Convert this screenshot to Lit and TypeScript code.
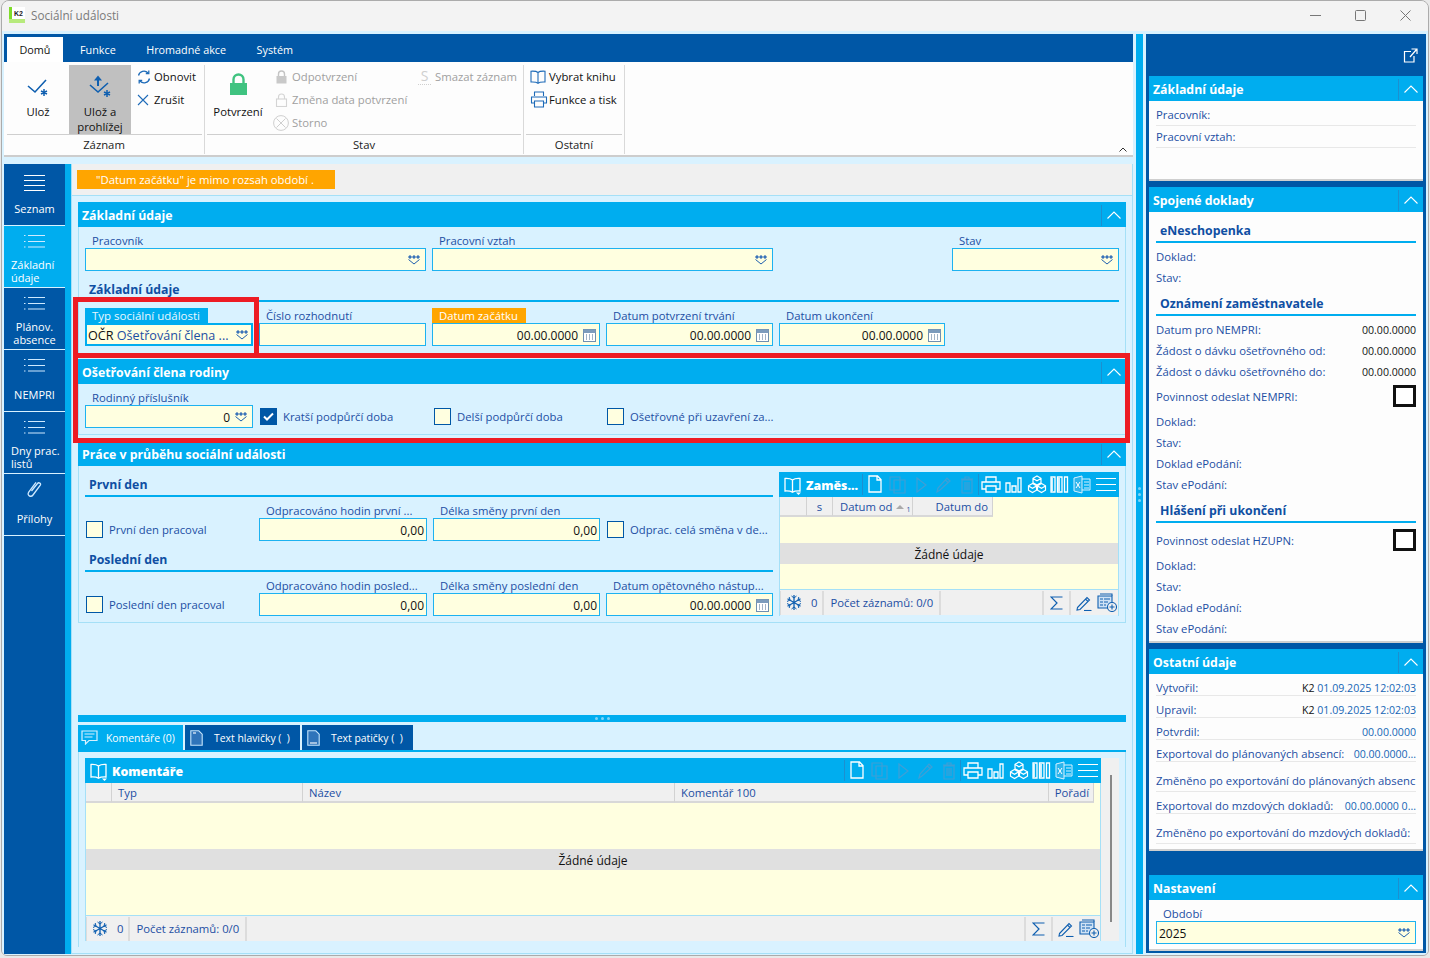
import { LitElement, html, css, nothing } from "lit";
import { customElement } from "lit/decorators.js";

const caret = html`<path d="M14 17.5h5l-2.5 2.5z" fill="#fff" stroke="none" />`;
const I = {
  save: html`<svg width="22" height="20" viewBox="0 0 22 20" fill="none" stroke="#0f5fb0" stroke-width="1.6"><path d="M1 8l7 6L19 2" /><path d="M17 11v7M14 13l6 3M20 13l-6 3" stroke-width="1.5" /></svg>`,
  saveUp: html`<svg width="24" height="24" viewBox="0 0 24 24" fill="none" stroke="#0f5fb0" stroke-width="1.6"><path d="M10 11V3" stroke-width="2" /><path d="M6 5.500l4-5 4 5z" fill="#0f5fb0" stroke="none" /><path d="M2 10l8 7 10-9" /><path d="M19 15v7M16 17l6 3M22 17l-6 3" stroke-width="1.5" /></svg>`,
  refresh: html`<svg width="14" height="14" viewBox="0 0 14 14" fill="none" stroke="#1e6bb8" stroke-width="1.3"><path d="M1.500 5.500A5.500 5.500 0 0 1 11 3" /><path d="M12.500 8.500A5.500 5.500 0 0 1 3 11" /><path d="M11.800.5v3h-3M2.200 13.500v-3h3" /></svg>`,
  cross: html`<svg width="12" height="12" viewBox="0 0 12 12" fill="none" stroke="#1e6bb8" stroke-width="1.1"><path d="M1 1l10 10M11 1L1 11" /></svg>`,
  lockG: html`<svg width="19" height="23" viewBox="0 0 19 23"><path d="M4.500 10V6.500a5 5 0 0 1 10 0V10" fill="none" stroke="#3fc380" stroke-width="2.4" /><rect x="1" y="10" width="17" height="12" fill="#3fc380" /></svg>`,
  lockF: html`<svg width="13" height="14" viewBox="0 0 13 14"><path d="M3.500 6V4a3 3 0 0 1 6 0v2" fill="none" stroke="#c4c4c4" stroke-width="1.4" /><rect x="1.500" y="6" width="10" height="7.500" fill="#c9c9c9" /></svg>`,
  lockO: html`<svg width="13" height="14" viewBox="0 0 13 14" fill="none" stroke="#d4d4d4" stroke-width="1.1"><path d="M3.500 6V4a3 3 0 0 1 6 0v2" /><rect x="1.500" y="6" width="10" height="7.500" /></svg>`,
  noEntry: html`<svg class="ne" width="16" height="16" viewBox="0 0 16 16" fill="none" stroke="#cfcfcf" stroke-width="1"><circle cx="8" cy="8" r="7.400" /><path d="M3.500 3.500l9 9M12.500 3.500l-9 9" /></svg>`,
  book: html`<svg width="16" height="14" viewBox="0 0 16 14" fill="none" stroke="#1e6bb8" stroke-width="1.1"><path d="M8 2.500C6.500 1.200 4 1 1 1.200V12c3-.2 5.500 0 7 1.300 1.500-1.300 4-1.500 7-1.300V1.200C12 1 9.500 1.200 8 2.500zM8 2.500v10.800" /></svg>`,
  printer: html`<svg width="18" height="17" viewBox="0 0 18 17" fill="none" stroke="#1e6bb8" stroke-width="1.1"><path d="M4.500 5V1h9v4M4.500 12H1.500V6h15v6h-3" /><path d="M4.500 10h9v6h-9z" /></svg>`,
  popout: html`<svg width="15" height="15" viewBox="0 0 15 15" fill="none" stroke="#fff" stroke-width="1.200"><path d="M8 3.500H1.500v10.500H11V8" /><path d="M7 9l6.500-7.500M8.500 1h5.500v5" /></svg>`,
  chevron: html`<svg width="14" height="8" viewBox="0 0 14 8" fill="none" stroke="#fff" stroke-width="1.100"><path d="M.5 7.500L7 1l6.500 6.500" /></svg>`,
  chevronDark: html`<svg width="8" height="5" viewBox="0 0 8 5" fill="none" stroke="#333" stroke-width="1"><path d="M.5 4.500L4 1l3.500 3.500" /></svg>`,
  combo: html`<svg width="12" height="10" viewBox="0 0 12 10" fill="none" stroke="#1e5fae" stroke-width="1"><path d="M1 1h2v2H1zM5 1h2v2H5zM9 1h2v2H9z" fill="#8fb4dc" /><path d="M.5 4.500L6 9l5.500-4.500" /></svg>`,
  cal: html`<svg width="13" height="14" viewBox="0 0 13 14"><rect x=".5" y="1.500" width="12" height="12" fill="#fff" stroke="#6f8fb0" /><rect x=".5" y="1.500" width="12" height="3.500" fill="#7d9cbc" /><path d="M3 7h1M6 7h1M9 7h1M3 9h1M6 9h1M9 9h1M3 11h1M6 11h1M9 11h1" stroke="#44688c" /></svg>`,
  tick: html`<svg width="11" height="9" viewBox="0 0 11 9" fill="none" stroke="#fff" stroke-width="2"><path d="M1 4.500l3 3 6-6" /></svg>`,
  list4: html`<svg width="21" height="17" viewBox="0 0 21 17" stroke="#fff" stroke-width="1"><path d="M0 1.500h21M0 6.500h21M0 11.500h21M0 16.500h21" /></svg>`,
  list3: html`<svg width="21" height="14" viewBox="0 0 21 14" stroke="#cfeaff" stroke-width="1"><path d="M0 1.500h1.500M4 1.500h17M0 7.500h1.500M4 7.500h17M0 13h1.500M4 13h17" /></svg>`,
  clip: html`<svg width="17" height="20" viewBox="0 0 17 20" fill="none" stroke="#cfeaff" stroke-width="1.300"><path d="M5.500 11.500l6-7.500c1.200-1.500 4-.2 2.800 1.700L7 15.500c-2 2.600-6.500.5-4.300-2.800L10 2.800" transform="translate(0 .5)" /></svg>`,
  bubble: html`<svg width="17" height="15" viewBox="0 0 17 15" fill="none" stroke="#d8f1ff" stroke-width="1.200"><path d="M1 1h15v9.500H8L4.500 14v-3.500H1z" /><path d="M3.500 4h10M3.500 7h8" /></svg>`,
  docT: html`<svg width="13" height="16" viewBox="0 0 13 16" fill="#2f74ba" stroke="#c4e4fb" stroke-width="1.100"><path d="M.8.800h8l3.400 3.400v11H.8z" /><path d="M3 3h3" stroke="#fff" /></svg>`,
  docB: html`<svg width="13" height="16" viewBox="0 0 13 16" fill="#2f74ba" stroke="#c4e4fb" stroke-width="1.100"><path d="M.8.800h8l3.400 3.400v11H.8z" /><path d="M3 13h7" stroke="#fff" /></svg>`,
  star: html`<svg width="16" height="17" viewBox="0 0 16 17" fill="none" stroke="#0f5fb0" stroke-width="1.300"><path d="M8 1v15M1.500 4.700l13 7.600M14.500 4.700l-13 7.600" /><path d="M5.500 2L8 4l2.500-2M5.500 15L8 13l2.500 2M1 7.500L4 6 3.200 3M15 7.500L12 6l.8-3M1 9.500L4 11l-.8 3M15 9.500L12 11l.8 3" stroke-width="1" /></svg>`,
  sigma: html`<svg width="13" height="14" viewBox="0 0 13 14" fill="none" stroke="#0f5fb0" stroke-width="1.200"><path d="M12.500 1H1l6 6-6 6h11.500" /></svg>`,
  pen: html`<svg width="16" height="16" viewBox="0 0 16 16" fill="none" stroke="#0f5fb0" stroke-width="1.100"><path d="M1.500 12.500L11 2.500l2.500 2.500-9.500 9.500-3 .5zM9.500 4l2.500 2.500" /><path d="M8 15.500h7.500" /></svg>`,
  addList: html`<svg width="20" height="19" viewBox="0 0 20 19" fill="none" stroke="#0f5fb0" stroke-width="1.100"><path d="M3 1h12v2" /><path d="M1 3h14v12H1z" fill="#cfe2f5" /><path d="M3 6h3M7 6h6M3 9h3M7 9h4M3 12h3M7 12h2" /><circle cx="15" cy="14" r="4.500" fill="#f0f0f0" /><path d="M15 11.500v5M12.500 14h5" /></svg>`,
};

const T = {
  doc: html`<svg width="22" height="22" viewBox="0 0 22 22" fill="none" stroke="#fff" stroke-width="1.300"><path d="M5 2h8.500l3.500 3.500V18H5zM13 2v4h4" /></svg>`,
  copy: html`<svg width="22" height="22" viewBox="0 0 22 22" fill="none" stroke="#3e9fd6" stroke-width="1.200"><path d="M3 3h10v13H3zM7 6h11v13H7z" /></svg>`,
  play: html`<svg width="22" height="22" viewBox="0 0 22 22" fill="none" stroke="#3e9fd6" stroke-width="1.200"><path d="M7 4l9 7-9 7z" /></svg>`,
  pen: html`<svg width="22" height="22" viewBox="0 0 22 22" fill="none" stroke="#3e9fd6" stroke-width="1.200"><path d="M4 18l1-4 9-10 3 3-10 9zM12.500 6l3 3" /></svg>`,
  trash: html`<svg width="22" height="22" viewBox="0 0 22 22" fill="none" stroke="#3e9fd6" stroke-width="1.200"><path d="M6 6h10v13H6zM5 5h12M9 5V3h4v2M9 8v8M11 8v8M13 8v8" /></svg>`,
  printer: html`<svg width="22" height="22" viewBox="0 0 22 22" fill="none" stroke="#fff" stroke-width="1.300"><path d="M6 8V3h10v5M6 15H2V8h18v7h-4" /><path d="M6 12h10v6H6z" />${caret}</svg>`,
  chart: html`<svg width="22" height="22" viewBox="0 0 22 22" fill="none" stroke="#fff" stroke-width="1.300"><path d="M3 9h4v9H3zM9 12h4v6H9zM15 4h3v14h-3z" />${caret}</svg>`,
  cubes: html`<svg width="22" height="22" viewBox="0 0 22 22" fill="none" stroke="#fff" stroke-width="1.200"><path d="M11 2l4 2.300v4.400L11 11 7 8.700V4.300zM6.500 9.500l4 2.300v4.400L6.500 18.500l-4-2.300v-4.400zM15.500 9.500l4 2.300v4.400l-4 2.300-4-2.300v-4.400zM7 4.500l4 2.200 4-2.200M2.500 12l4 2.200 4-2.200M11.500 12l4 2.200 4-2.200" />${caret}</svg>`,
  cols: html`<svg width="22" height="22" viewBox="0 0 22 22" fill="none" stroke="#fff" stroke-width="1.300"><path d="M2 3h4v15H2zM8.500 3H13v15H8.500zM15.500 3h3v15h-3z" /><path d="M3 4v13M10 4v13" stroke-width="1.600" />${caret}</svg>`,
  excel: html`<svg width="22" height="22" viewBox="0 0 22 22" fill="none" stroke="#d8f1ff" stroke-width="1"><path d="M10 2L2 4v13l8 2z" fill="#2db5ec" /><path d="M10 5h8v11h-8M12 8h5M12 11h5M12 14h5" /><path d="M4 8l4 6M8 8l-4 6" stroke="#fff" />${caret}</svg>`,
  menu: html`<svg width="22" height="22" viewBox="0 0 22 22" stroke="#fff" stroke-width="1.200"><path d="M1 4.500h20M1 10.500h20M1 16.500h20" /></svg>`,
  book: html`<svg width="20" height="20" viewBox="0 0 20 20" fill="none" stroke="#fff" stroke-width="1.300"><path d="M9.500 5C7.500 3.500 5 3.300 2 3.500V16c3-.2 5.500 0 7.500 1.300C11.500 16 14 15.800 17 16V3.500C14 3.300 11.500 3.500 9.500 5zM9.500 5v12" /><path d="M13 17.500h5l-2.500 2.500z" fill="#fff" stroke="none" /></svg>`,
};

@customElement("app-root")
export class AppRoot extends LitElement {
  static styles = css`
    :host { display: block; width: 1430px; height: 958px; overflow: hidden; position: relative; background: #e9e9e9;
      font-family: "Open Sans", "Noto Sans", sans-serif; font-size: 11.3px; color: #1c4ea3; }
    * { box-sizing: border-box; }
    svg { display: block; flex: none; }
    .window { margin: 0 1px; width: 1428px; height: 956px; border: 1px solid #ababab; border-radius: 8px 8px 6px 6px; overflow: hidden; display: flex; flex-direction: column; }
    .title { height: 30px; background: #f3f3f3; display: flex; align-items: center; padding: 0 0 2px 7px; color: #7a7a7a; font-size: 11.7px; flex: none; }
    .logo { width: 16px; height: 16px; background: linear-gradient(90deg, #7fdc2a 0 3px, #fff 3px); border-bottom: 4px solid #b7ea7c; margin-right: 6px; font: bold 7px "Liberation Sans", sans-serif; color: #222; display: flex; align-items: center; justify-content: center; padding-left: 3px; }
    .winbtns { margin-left: auto; display: flex; align-items: center; }
    .winbtn { width: 45px; height: 28px; display: flex; align-items: center; justify-content: center; }
    .client { flex: 1; min-height: 0; background: #d9f2ff; display: flex; padding: 3px 0 1px 2px; }
    .main { width: 1129px; display: flex; flex-direction: column; flex: none; }
    .vsplit { width: 7px; margin: 0 3px; background: #00adef; flex: none; display: flex; flex-direction: column; align-items: center; justify-content: center; gap: 3px; }
    .vsplit i, .hsplit i { width: 3px; height: 3px; background: #7fd4f7; border-radius: 50%; display: block; }
    .side { width: 280px; flex: none; background: #0057a6; padding: 0 3px; margin-bottom: 1px; display: flex; flex-direction: column; }
    .side-top { height: 42px; display: flex; justify-content: flex-end; align-items: flex-start; padding: 14px 5px 0 0; flex: none; }

    .tabs { height: 28px; background: #0057a6; display: flex; align-items: flex-end; padding-left: 3px; color: #fff; flex: none; font-size: 10.8px; }
    .tab { height: 25px; padding: 0 13.5px 0 17px; display: flex; align-items: center; color: #fff; }
    .tab.on { width: 56px; padding: 0; justify-content: center; background: #fff; color: #111; }
    .ribbon { height: 95px; background: #fdfdfd; border-bottom: 2px solid #cdcdcd; display: flex; position: relative; flex: none; color: #111; }
    .group { display: flex; flex-direction: column; border-right: 1px solid #d9d9d9; margin: 3px 0 1px; }
    .g1 { width: 201px; } .g2 { width: 319px; } .g3 { width: 101px; }
    .g-body { height: 69px; display: flex; margin: 0 2px; border-bottom: 1px solid #cfcfcf; box-sizing: content-box; }
    .g1 .g-body { margin-left: 3px; }
    .g-label { flex: 1; display: flex; align-items: center; justify-content: center; color: #222; padding-bottom: 1px; }
    .big { width: 62px; height: 69px; display: flex; flex-direction: column; align-items: center; text-align: center; line-height: 15px; }
    .big .ic { height: 39px; display: flex; align-items: center; justify-content: center; flex: none; }
    .ic.p7 { padding-top: 7px; } .ic.p4 { padding-top: 4px; }
    .big.sel { background: #c0c0c0; }
    .g2 .big { width: 58px; margin-left: 2px; }
    .col { display: flex; flex-direction: column; }
    .small { height: 23px; display: flex; align-items: center; white-space: nowrap; }
    .small .sic { width: 17px; display: flex; justify-content: flex-start; flex: none; }
    .ne { margin-left: -2px; }
    .dis { color: #a0a0a0; }
    .c1 { margin-left: 6px; }
    .c2 { margin-left: 8px; width: 143px; }
    .s-glyph { width: 13px; height: 16px; display: block; font: 14px/13px "Open Sans", sans-serif; color: #cfcfcf; border-bottom: 1px dotted #cfcfcf; text-align: center; }
    .c4 { margin-left: 4px; } .c4 .sic { width: 19px; }
    .r-toggle { position: absolute; right: 6px; bottom: 3px; }

    .work { flex: 1; min-height: 0; margin-top: 7px; display: flex; }
    .nav { width: 61px; background: #0057a6; color: #fff; flex: none; display: flex; flex-direction: column; font-size: 11px; }
    .strip { width: 6px; background: #00adef; flex: none; }
    .nitem { height: 62px; border-bottom: 1px solid #d9f2ff; display: flex; flex-direction: column; align-items: center; flex: none; }
    .nitem.on { background: #00adef; }
    .nitem.first .nic { padding-top: 6px; height: 30px; }
    .nic { height: 30px; display: flex; align-items: center; justify-content: center; flex: none; }
    .nlabel { height: 30px; width: 100%; display: flex; align-items: center; justify-content: center; line-height: 13px; text-align: center; }
    .nlabel.one { padding-bottom: 2px; }
    .nlabel.start { justify-content: flex-start; text-align: left; padding-left: 7px; }

    .content { flex: 1; min-width: 0; border: 1px solid #a5e0f7; border-top: 0; display: flex; flex-direction: column; }
    .msgbar { height: 32px; background: #f0f0f0; border-bottom: 1px solid #a5e0f7; padding: 6px 0 0 5px; flex: none; }
    .msg { width: 258px; height: 19px; background: #ffa500; color: #fff; display: flex; align-items: center; padding-left: 19px; }
    .sections { padding: 6px 6px 0; display: flex; flex-direction: column; flex: 1; min-height: 0; }
    .sec { border: 1px solid #a5e0f7; border-top: 0; flex: none; }
    .s1 { margin-bottom: 4px; } .s2 { margin-bottom: 6px; }
    .sech { height: 25px; background: #00adef; color: #fff; font-weight: 700; font-size: 12.3px; display: flex; align-items: center; padding: 1px 0 0 4px; margin: 0 -1px; }
    .tog { margin-left: auto; width: 25px; height: 21px; border-left: 1px solid #1c8fd0; display: flex; align-items: center; justify-content: center; }
    .secb { padding: 6px 6px 0; }
    .s1 .secb { padding-bottom: 8px; } .s2 .secb { padding-bottom: 6px; }
    .s3 .secb { display: flex; gap: 6px; padding-bottom: 6px; }
    .row { display: flex; gap: 6px; align-items: flex-end; }
    .f { display: flex; flex-direction: column; flex: none; }
    .w341 { width: 341px; } .w167 { width: 167px; } .w168 { width: 168px; } .w166 { width: 166px; }
    .g179 { margin-left: 173px; }
    .lab { height: 15px; padding-left: 7px; display: flex; align-items: center; white-space: nowrap; line-height: 15px; }
    .lab.hl { background: #00adef; color: #e8f8ff; width: 123px; font-size: 11.5px; }
    .lab.warn { background: #ffa500; color: #fff; width: 94px; }
    .inp { height: 23px; border: 1px solid #1db2f0; background: #ffffe0; display: flex; align-items: center; justify-content: flex-end; padding: 1px 2px 0; color: #111; font-size: 12px; white-space: nowrap; overflow: hidden; gap: 5px; }
    .inp.date { padding-right: 3px; }
    .inp.hl { border-width: 2px; border-color: #00adef; justify-content: space-between; padding: 1px 3px 0 1px; font-size: 12.6px; }
    .inp.hl em { color: #1c4ea3; font-style: normal; }
    .inp.combo { padding-right: 5px; }
    .blk { color: #111; }
    .sub { height: 21px; border-bottom: 2px solid #00adef; font-weight: 700; font-size: 12.3px; padding-left: 4px; color: #0f4fa3; line-height: 18px; }
    .m10 { margin-top: 10px; } .mb6 { margin-bottom: 6px; } .m4 { margin-top: 4px; }
    .chk { height: 23px; display: flex; align-items: center; white-space: nowrap; gap: 6px; }
    .box { width: 17px; height: 17px; border: 1px solid #0057a6; background: #ffffe0; display: flex; align-items: center; justify-content: center; flex: none; }
    .box.on { background: #0057a6; }
    .p1 { padding-left: 1px; width: 168px; }
    .lcol { width: 688px; flex: none; }
    .c-a { margin-left: 1px; width: 168px; }
    .c-b { width: 167px; }
    .c-d { margin-left: 1px; }

    .grid { display: flex; flex-direction: column; border: solid #a5e0f7; border-width: 0 1px; }
    .g-small { width: 340px; flex: none; }
    .g-wide { width: 1016px; flex: none; }
    .gh { height: 25px; background: #00adef; color: #fff; font-weight: 700; font-size: 12.3px; display: flex; align-items: center; margin: 0 -1px; padding-left: 4px; }
    .gh b { margin-left: 3px; padding-top: 1px; white-space: nowrap; }
    .tools { margin-left: auto; margin-right: 2px; display: flex; align-items: center; }
    .tb { width: 23px; height: 25px; display: flex; align-items: center; justify-content: center; }
    .tsep { width: 1px; height: 21px; background: #1c8fd0; }
    .colh { height: 20px; background: #ffffe0; display: flex; flex: none; }
    .ch { height: 20px; background: #f0f0f0; border-right: 1px solid #d2d2d2; border-bottom: 2px solid #d8d8d8; display: flex; align-items: center; padding: 1px 4px 0 6px; white-space: nowrap; flex: none; gap: 3px; }
    .ch.ctr { justify-content: center; padding: 1px 0 0; } .ch.rt { justify-content: flex-end; } .ch.p8 { padding-left: 7px; }
    .sup { font-size: 7px; margin-top: 6px; }
    .tri { width: 0; height: 0; border: 4px solid transparent; border-top: 0; border-bottom: 4px solid #aaa; }
    .w26 { width: 26px; } .w27 { width: 27px; } .w80 { width: 80px; } .w191 { width: 191px; } .w372 { width: 372px; } .w374 { width: 374px; } .w45 { width: 45px; }
    .yel { background: #ffffe0; flex: none; }
    .h26 { height: 26px; } .h25 { height: 25px; } .h46 { height: 46px; } .h45 { height: 45px; }
    .none { height: 21px; background: #e0e0e0; color: #111; display: flex; align-items: center; justify-content: center; font-size: 12px; flex: none; padding-top: 1px; }
    .stat { height: 26px; background: #f0f0f0; border-top: 1px solid #a5e0f7; display: flex; align-items: center; flex: none; white-space: nowrap; }
    .st { height: 24px; display: flex; align-items: center; border-right: 2px solid #dcdcdc; flex: none; }
    .st.a { padding: 0 5px 0 5px; gap: 9px; border-left: 1px solid #dcdcdc; } .st.b { padding: 0 6px; }
    .grow { flex: 1; }
    .sr { height: 24px; display: flex; align-items: center; justify-content: center; border-left: 2px solid #dcdcdc; width: 27px; flex: none; }
    .sr.plain { width: 22px; border: 0; justify-content: flex-start; padding-left: 1px; }

    .hsplit { margin-top: auto; height: 7px; background: #00adef; display: flex; align-items: center; justify-content: center; gap: 3px; flex: none; }
    .ptabs { margin-top: 3px; height: 27px; border-bottom: 2px solid #00adef; display: flex; gap: 2px; color: #fff; flex: none; font-size: 10.4px; }
    .ptab { height: 25px; background: #0057a6; display: flex; align-items: center; white-space: nowrap; flex: none; }
    .ptab.on { background: #00adef; width: 105px; padding-left: 3px; gap: 8px; }
    .ptab.t2 { width: 115px; padding-left: 5px; gap: 11px; }
    .ptab.t3 { width: 111px; padding-left: 5px; gap: 11px; }
    .pane { border: solid #a5e0f7; border-width: 0 1px; padding: 6px; display: flex; flex: none; margin-bottom: 6px; }
    .track { width: 18px; background: #f0f0f0; padding: 17px 0 19px 9px; flex: none; display: flex; }
    .thumb { width: 2px; background: #888; }

    .panel { background: #fdfdfd; flex: none; border-bottom: 2px solid #cfcfcf; }
    .ph { height: 25px; background: #00adef; color: #fff; font-weight: 700; font-size: 12.3px; display: flex; align-items: center; padding: 1px 0 0 4px; }
    .pb { padding: 3px 7px 0; }
    .p-a { height: 105px; margin-bottom: 6px; }
    .p-b { height: 456px; margin-bottom: 6px; }
    .p-c { height: 202px; margin-bottom: 24px; }
    .p-d { height: 76px; }
    .pc .pb, .pb.pd { padding-top: 0; }
    .kv { height: 22px; display: flex; align-items: center; justify-content: space-between; white-space: nowrap; border-bottom: 1px solid #e8e8e8; overflow: hidden; }
    .kv.low { align-items: flex-end; line-height: 14px; }
    .kv.tall { height: 30px; padding-bottom: 3px; }
    .kr { height: 21px; display: flex; align-items: center; justify-content: space-between; white-space: nowrap; }
    .kr.cb { height: 29px; padding-bottom: 1px; }
    .kr .v { color: #111; font-size: 10.6px; }
    .bk { width: 23px; height: 22px; border: 3px solid #111; background: #fff; }
    .sp { margin-top: 10px; margin-bottom: 3px; }
    .sp.t7 { margin-top: 7px; }
    .bluev { color: #1565b5; font-size: 10.6px; }
    .blackv { color: #111; }
    .setlab { height: 15px; padding-left: 7px; margin-top: 6px; line-height: 15px; }
    .ovr { position: absolute; border: 5px solid #ed1c24; pointer-events: none; }
    .o1 { left: 73px; top: 297px; width: 186px; height: 61px; border-bottom: 0; }
    .o2 { left: 73px; top: 353px; width: 1057px; height: 90px; }
  `;

  field(label: string, w: string, body: unknown, lab = "") {
    return html`<div class="f ${w}"><div class="lab ${lab}">${label}</div>${body}</div>`;
  }
  combo(v = "") { return html`<div class="inp combo">${v}${I.combo}</div>`; }
  date() { return html`<div class="inp date">00.00.0000${I.cal}</div>`; }
  plain(v = "") { return html`<div class="inp">${v}</div>`; }
  check(label: string, on = false, cls = "") {
    return html`<div class="chk ${cls}"><span class="box ${on ? "on" : ""}">${on ? I.tick : nothing}</span>${label}</div>`;
  }
  sechead(t: string) {
    return html`<div class="sech">${t}<span class="tog">${I.chevron}</span></div>`;
  }
  toolbar() {
    return html`<div class="tools">
      <span class="tsep"></span>
      <span class="tb">${T.doc}</span><span class="tb">${T.copy}</span><span class="tb">${T.play}</span><span class="tb">${T.pen}</span><span class="tb">${T.trash}</span>
      <span class="tsep"></span>
      <span class="tb">${T.printer}</span><span class="tb">${T.chart}</span><span class="tb">${T.cubes}</span><span class="tb">${T.cols}</span><span class="tb">${T.excel}</span>
      <span class="tb">${T.menu}</span>
    </div>`;
  }
  status() {
    return html`<div class="stat">
      <div class="st a">${I.star}<span>0</span></div>
      <div class="st b">Počet záznamů: 0/0</div>
      <div class="grow"></div>
      <div class="sr">${I.sigma}</div><div class="sr">${I.pen}</div><div class="sr plain">${I.addList}</div>
    </div>`;
  }
  nitem(label: unknown, icon: unknown, cls = "", lcls = "") {
    return html`<div class="nitem ${cls}"><div class="nic">${icon}</div><div class="nlabel ${lcls}">${label}</div></div>`;
  }

  render() {
    return html`<div class="window">
      <div class="title">
        <span class="logo">K2</span>Sociální události
        <div class="winbtns">
          <span class="winbtn"><svg width="11" height="1"><path d="M0 .5h11" stroke="#777" /></svg></span>
          <span class="winbtn"><svg width="11" height="11" fill="none"><rect x=".5" y=".5" width="10" height="10" rx="1" stroke="#777" /></svg></span>
          <span class="winbtn"><svg width="11" height="11" fill="none"><path d="M.5.5l10 10M10.500.5l-10 10" stroke="#777" /></svg></span>
        </div>
      </div>
      <div class="client">
        <div class="main">
          <div class="tabs">
            <div class="tab on">Domů</div><div class="tab">Funkce</div><div class="tab">Hromadné akce</div><div class="tab">Systém</div>
          </div>
          <div class="ribbon">
            <div class="group g1">
              <div class="g-body">
                <div class="big"><div class="ic p7">${I.save}</div>Ulož</div>
                <div class="big sel"><div class="ic p4">${I.saveUp}</div>Ulož a<br />prohlížej</div>
                <div class="col c1">
                  <div class="small"><span class="sic">${I.refresh}</span>Obnovit</div>
                  <div class="small"><span class="sic">${I.cross}</span>Zrušit</div>
                </div>
              </div>
              <div class="g-label">Záznam</div>
            </div>
            <div class="group g2">
              <div class="g-body">
                <div class="big"><div class="ic">${I.lockG}</div>Potvrzení</div>
                <div class="col c2 dis">
                  <div class="small"><span class="sic">${I.lockF}</span>Odpotvrzení</div>
                  <div class="small"><span class="sic">${I.lockO}</span>Změna data potvrzení</div>
                  <div class="small"><span class="sic">${I.noEntry}</span>Storno</div>
                </div>
                <div class="col dis">
                  <div class="small"><span class="sic"><span class="s-glyph">S</span></span>Smazat záznam</div>
                </div>
              </div>
              <div class="g-label">Stav</div>
            </div>
            <div class="group g3">
              <div class="g-body">
                <div class="col c4">
                  <div class="small"><span class="sic">${I.book}</span>Vybrat knihu</div>
                  <div class="small"><span class="sic">${I.printer}</span>Funkce a tisk</div>
                </div>
              </div>
              <div class="g-label">Ostatní</div>
            </div>
            <span class="r-toggle">${I.chevronDark}</span>
          </div>
          <div class="work">
            <div class="nav">
              ${this.nitem("Seznam", I.list4, "first", "one")}
              ${this.nitem(html`Základní<br />údaje`, I.list3, "on", "start")}
              ${this.nitem(html`Plánov.<br />absence`, I.list3)}
              ${this.nitem("NEMPRI", I.list3, "", "one")}
              ${this.nitem(html`Dny prac.<br />listů`, I.list3, "", "start")}
              ${this.nitem("Přílohy", I.clip, "", "one")}
            </div>
            <div class="strip"></div>
            <div class="content">
              <div class="msgbar"><div class="msg">"Datum začátku" je mimo rozsah období .</div></div>
              <div class="sections">
                <div class="sec s1">
                  ${this.sechead("Základní údaje")}
                  <div class="secb">
                    <div class="row">
                      ${this.field("Pracovník", "w341", this.combo())}
                      ${this.field("Pracovní vztah", "w341", this.combo())}
                      <div class="g179">${this.field("Stav", "w167", this.combo())}</div>
                    </div>
                    <div class="sub m10 mb6">Základní údaje</div>
                    <div class="row">
                      ${this.field("Typ sociální události", "w168", html`<div class="inp hl"><span><span class="blk">OČR</span> <em>Ošetřování člena ...</em></span>${I.combo}</div>`, "hl")}
                      ${this.field("Číslo rozhodnutí", "w167", this.plain())}
                      ${this.field("Datum začátku", "w168", this.date(), "warn")}
                      ${this.field("Datum potvrzení trvání", "w167", this.date())}
                      ${this.field("Datum ukončení", "w166", this.date())}
                    </div>
                  </div>
                </div>
                <div class="sec s2">
                  ${this.sechead("Ošetřování člena rodiny")}
                  <div class="secb">
                    <div class="row">
                      ${this.field("Rodinný příslušník", "w168", html`<div class="inp combo"><span class="blk">0</span>${I.combo}</div>`)}
                      ${this.check("Kratší podpůrčí doba", true, "c-a")}
                      ${this.check("Delší podpůrčí doba", false, "c-b")}
                      ${this.check("Ošetřovné při uzavření za...")}
                    </div>
                  </div>
                </div>
                <div class="sec s3">
                  ${this.sechead("Práce v průběhu sociální události")}
                  <div class="secb">
                    <div class="lcol">
                      <div class="sub m4 mb6">První den</div>
                      <div class="row">
                        ${this.check("První den pracoval", false, "p1")}
                        ${this.field("Odpracováno hodin první ...", "w168", this.plain("0,00"))}
                        ${this.field("Délka směny první den", "w167", this.plain("0,00"))}
                        ${this.check("Odprac. celá směna v de...", false, "c-d")}
                      </div>
                      <div class="sub m10 mb6">Poslední den</div>
                      <div class="row">
                        ${this.check("Poslední den pracoval", false, "p1")}
                        ${this.field("Odpracováno hodin posled...", "w168", this.plain("0,00"))}
                        ${this.field("Délka směny poslední den", "w167", this.plain("0,00"))}
                        ${this.field("Datum opětovného nástup...", "w167", this.date())}
                      </div>
                    </div>
                    <div class="grid g-small">
                      <div class="gh">${T.book}<b>Zaměs...</b>${this.toolbar()}</div>
                      <div class="colh">
                        <div class="ch w27"></div>
                        <div class="ch w26 ctr">s</div>
                        <div class="ch w80 p8">Datum od <span class="tri"></span><span class="sup">1</span></div>
                        <div class="ch w80 rt">Datum do</div>
                      </div>
                      <div class="yel h26"></div>
                      <div class="none">Žádné údaje</div>
                      <div class="yel h25"></div>
                      ${this.status()}
                    </div>
                  </div>
                </div>
                <div class="hsplit"><i></i><i></i><i></i></div>
                <div class="ptabs">
                  <div class="ptab on">${I.bubble}Komentáře (0)</div>
                  <div class="ptab t2">${I.docT}Text hlavičky ( \u00a0)</div>
                  <div class="ptab t3">${I.docB}Text patičky ( \u00a0)</div>
                </div>
                <div class="pane">
                  <div class="grid g-wide">
                    <div class="gh">${T.book}<b>Komentáře</b>${this.toolbar()}</div>
                    <div class="colh">
                      <div class="ch w26"></div>
                      <div class="ch w191">Typ</div>
                      <div class="ch w372">Název</div>
                      <div class="ch w374">Komentář 100</div>
                      <div class="ch w45 rt">Pořadí</div>
                    </div>
                    <div class="yel h46"></div>
                    <div class="none">Žádné údaje</div>
                    <div class="yel h45"></div>
                    ${this.status()}
                  </div>
                  <div class="track"><div class="thumb"></div></div>
                </div>
              </div>
            </div>
          </div>
        </div>
        <div class="vsplit"><i></i><i></i><i></i></div>
        <div class="side">
          <div class="side-top">${I.popout}</div>
          <div class="panel p-a">
            <div class="ph">Základní údaje<span class="tog">${I.chevron}</span></div>
            <div class="pb">
              <div class="kv">Pracovník:</div>
              <div class="kv">Pracovní vztah:</div>
            </div>
          </div>
          <div class="panel p-b pc">
            <div class="ph">Spojené doklady<span class="tog">${I.chevron}</span></div>
            <div class="pb">
              <div class="sub sp">eNeschopenka</div>
              <div class="kr">Doklad:</div>
              <div class="kr">Stav:</div>
              <div class="sub sp t7">Oznámení zaměstnavatele</div>
              <div class="kr">Datum pro NEMPRI:<span class="v">00.00.0000</span></div>
              <div class="kr">Žádost o dávku ošetřovného od:<span class="v">00.00.0000</span></div>
              <div class="kr">Žádost o dávku ošetřovného do:<span class="v">00.00.0000</span></div>
              <div class="kr cb">Povinnost odeslat NEMPRI:<span class="bk"></span></div>
              <div class="kr">Doklad:</div>
              <div class="kr">Stav:</div>
              <div class="kr">Doklad ePodání:</div>
              <div class="kr">Stav ePodání:</div>
              <div class="sub sp t7">Hlášení při ukončení</div>
              <div class="kr cb">Povinnost odeslat HZUPN:<span class="bk"></span></div>
              <div class="kr">Doklad:</div>
              <div class="kr">Stav:</div>
              <div class="kr">Doklad ePodání:</div>
              <div class="kr">Stav ePodání:</div>
            </div>
          </div>
          <div class="panel p-c pc">
            <div class="ph">Ostatní údaje<span class="tog">${I.chevron}</span></div>
            <div class="pb">
              <div class="kv low">Vytvořil:<span class="bluev"><span class="blackv">K2</span> 01.09.2025 12:02:03</span></div>
              <div class="kv low">Upravil:<span class="bluev"><span class="blackv">K2</span> 01.09.2025 12:02:03</span></div>
              <div class="kv low">Potvrdil:<span class="bluev">00.00.0000</span></div>
              <div class="kv low">Exportoval do plánovaných absencí:<span class="bluev">00.00.0000...</span></div>
              <div class="kv low tall">Změněno po exportování do plánovaných absenc</div>
              <div class="kv low">Exportoval do mzdových dokladů:<span class="bluev">00.00.0000 0...</span></div>
              <div class="kv low tall">Změněno po exportování do mzdových dokladů:</div>
            </div>
          </div>
          <div class="panel p-d">
            <div class="ph">Nastavení<span class="tog">${I.chevron}</span></div>
            <div class="pb pd">
              <div class="setlab">Období</div>
              <div class="inp combo"><span class="blk grow">2025</span>${I.combo}</div>
            </div>
          </div>
        </div>
      </div>
    </div>
    <div class="ovr o1"></div>
    <div class="ovr o2"></div>`;
  }
}
